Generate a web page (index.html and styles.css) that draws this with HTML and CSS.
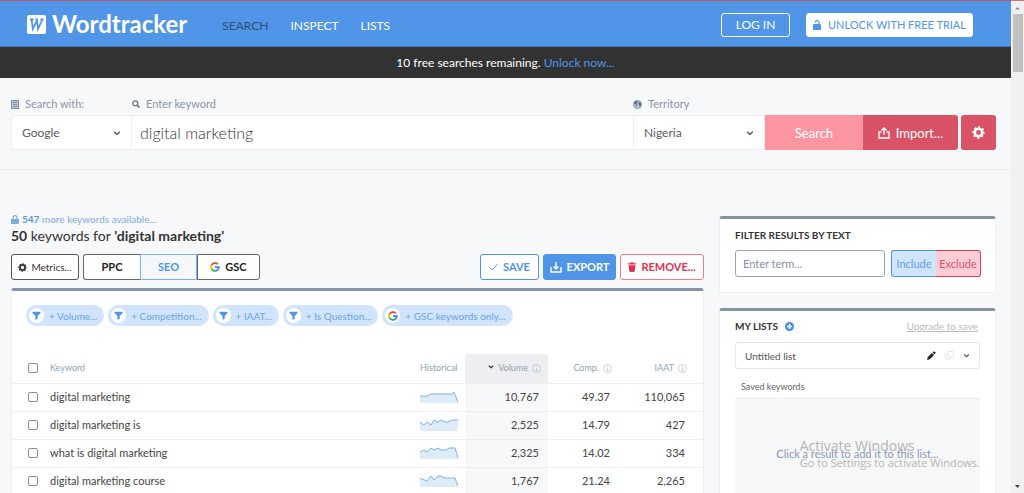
FILE: index.html
```html
<!DOCTYPE html>
<html lang="en">
<head>
<meta charset="utf-8">
<title>Wordtracker</title>
<link rel="stylesheet" href="styles.css">
</head>
<body>
<svg class="sprite" aria-hidden="true">
  <symbol id="chevron" viewBox="0 0 8 8"><path d="M1.300 2.800 4 5.400 6.700 2.800" fill="none" stroke="currentColor" stroke-width="1.200"/></symbol>
  <symbol id="funnel" viewBox="0 0 10 10"><path d="M.5.8h9v1.400L6.300 5.600v3.200L3.800 9.800V5.600L.5 2.200z" fill="currentColor"/></symbol>
  <symbol id="gear" viewBox="0 0 14 14"><g fill="none" stroke="currentColor"><circle cx="7" cy="7" r="4" stroke-width="2.700"/><circle cx="7" cy="7" r="5.700" stroke-width="1.800" stroke-dasharray="2.400 2.077" stroke-dashoffset="1.200"/></g></symbol>
  <symbol id="google" viewBox="0 0 12 12"><g fill="none" stroke-width="2.100"><path d="M9.400 2.700A4.800 4.800 0 0 0 1.800 3.700" stroke="#ea4335"/><path d="M1.800 3.600a4.800 4.800 0 0 0 0 4.800" stroke="#fbbc05"/><path d="M1.800 8.300a4.800 4.800 0 0 0 7.200 1.300" stroke="#34a853"/><path d="M6 6h4.800a4.800 4.800 0 0 1-1.900 3.700" stroke="#4285f4"/></g></symbol>
  <symbol id="info" viewBox="0 0 9 9"><circle cx="4.500" cy="4.500" r="4" fill="none" stroke="currentColor" stroke-width=".8"/><path d="M4.500 2v1M3.600 4h1v2.600M3.400 6.600h2.300" fill="none" stroke="currentColor" stroke-width=".8"/></symbol>
  <symbol id="lock" viewBox="0 0 8 9"><path d="M0 4h8v4.200a.8.8 0 0 1-.8.8H.8A.8.8 0 0 1 0 8.200z" fill="currentColor"/><path d="M2 4.200V2.700a2 2 0 0 1 4 0V4.200" fill="none" stroke="currentColor" stroke-width="1.200"/></symbol>
</svg>

<div class="page">
  <header class="topbar">
    <a class="logo" href="#">
      <svg width="19" height="19" viewBox="0 0 19 19" aria-hidden="true"><rect width="19" height="19" rx="2" fill="#fff"/><path d="M3 4.500H6.500M4.600 4.500 5.800 14 10 5.500 11 14 15.300 4.500M13.500 4.500H16.500M8.500 4.500h2" fill="none" stroke="#5095e8" stroke-width="1.800"/></svg>
      <span>Wordtracker</span>
    </a>
    <nav class="nav">
      <a class="nav-link nav-link-active" href="#">SEARCH</a>
      <a class="nav-link" href="#">INSPECT</a>
      <a class="nav-link" href="#">LISTS</a>
    </nav>
    <div class="account">
      <button class="login">LOG IN</button>
      <button class="trial"><svg width="8" height="10" viewBox="0 0 8 10" aria-hidden="true"><rect y="4" width="8" height="6" rx=".8" fill="currentColor"/><path d="M2.200 2.500a1.900 1.900 0 0 1 3.800.2v2" fill="none" stroke="currentColor" stroke-width="1.200"/></svg>UNLOCK WITH FREE TRIAL</button>
    </div>
  </header>
  <p class="notice">10 free searches remaining. <a href="#">Unlock now...</a></p>

  <form class="search">
    <div class="field field-engine">
      <label for="engine"><svg width="8" height="9" viewBox="0 0 8 9" aria-hidden="true"><rect x=".5" y=".5" width="7" height="8" fill="#b9c5d4" stroke="#8291a7"/><path d="M2 2.500h4M2 4.500h4M2 6.500h4" stroke="#75869d" stroke-width=".8"/></svg>Search with:</label>
      <div class="select-box"><select id="engine"><option>Google</option></select><svg class="chevron"><use href="#chevron"/></svg></div>
    </div>
    <div class="field field-keyword">
      <label for="keyword"><svg width="8" height="8" viewBox="0 0 8 8" aria-hidden="true"><circle cx="3.300" cy="3.300" r="2.500" fill="none" stroke="#67768b" stroke-width="1.300"/><path d="M5 5 7.500 7.500" stroke="#67768b" stroke-width="1.600"/></svg>Enter keyword</label>
      <input id="keyword" class="keyword-input" type="text" value="digital marketing">
    </div>
    <div class="field field-territory">
      <label for="territory"><svg width="9" height="9" viewBox="0 0 9 9" aria-hidden="true"><circle cx="4.500" cy="4.500" r="4" fill="#c9d3df" stroke="#7f8fa5"/><path d="M1 2.500 3 1l2 .5-.5 1.500L3 4l1.500 1L4 7 3 6 2.500 4.500 1 4zM6 2l2 1v2.500L6.500 7 6 5 5 4z" fill="#5f7088"/></svg>Territory</label>
      <div class="select-box"><select id="territory"><option>Nigeria</option></select><svg class="chevron"><use href="#chevron"/></svg></div>
    </div>
    <button class="btn-search" type="button">Search</button>
    <button class="btn-import" type="button"><svg width="12" height="12" viewBox="0 0 12 12" aria-hidden="true"><path d="M3.500 5H1v6h10V5H8.500M6 8V1.500M3.500 3.500 6 1 8.500 3.500" fill="none" stroke="currentColor" stroke-width="1.300"/></svg>Import...</button>
    <button class="btn-gear" type="button" aria-label="Settings"><svg width="13" height="13"><use href="#gear"/></svg></button>
  </form>

  <div class="content">
    <main class="results">
      <a class="more" href="#"><svg width="8" height="9"><use href="#lock"/></svg><span><b>547</b> more keywords available...</span></a>
      <h1 class="title"><b>50</b> keywords for <b>'digital marketing'</b></h1>
      <div class="toolbar">
        <button class="tool tool-metrics"><svg width="9" height="9"><use href="#gear"/></svg>Metrics...</button>
        <div class="tabs">
          <button class="tab">PPC</button>
          <button class="tab tab-active">SEO</button>
          <button class="tab tab-gsc"><svg width="10" height="10"><use href="#google"/></svg>GSC</button>
        </div>
        <div class="actions">
          <button class="tool tool-save"><svg width="9" height="8" viewBox="0 0 9 8" aria-hidden="true"><path d="M.8 4.500 3.300 7 8.300 1.200" fill="none" stroke="currentColor"/></svg>SAVE</button>
          <button class="tool tool-export"><svg width="12" height="12" viewBox="0 0 12 12" aria-hidden="true"><path d="M1 6v5h10V6M6 1v7M3.600 5.500 6 8l2.400-2.500" fill="none" stroke="currentColor" stroke-width="1.400"/></svg>EXPORT</button>
          <button class="tool tool-remove"><svg width="8" height="10" viewBox="0 0 8 10" aria-hidden="true"><path d="M0 1.200h2.500L3 .2h2l.5 1H8v1.300H0zM.6 3.300h6.800L6.700 9.300l-.8.7H2.100l-.8-.7z" fill="currentColor"/></svg>REMOVE...</button>
        </div>
      </div>

      <section class="card results-card">
        <div class="filters">
          <button class="pill"><span class="pill-icon"><svg width="9" height="9"><use href="#funnel"/></svg></span>+ Volume...</button>
          <button class="pill"><span class="pill-icon"><svg width="9" height="9"><use href="#funnel"/></svg></span>+ Competition...</button>
          <button class="pill"><span class="pill-icon"><svg width="9" height="9"><use href="#funnel"/></svg></span>+ IAAT...</button>
          <button class="pill"><span class="pill-icon"><svg width="9" height="9"><use href="#funnel"/></svg></span>+ Is Question...</button>
          <button class="pill"><span class="pill-icon"><svg width="10" height="10"><use href="#google"/></svg></span>+ GSC keywords only...</button>
        </div>
        <table class="table">
          <thead>
            <tr>
              <th class="col-check"><input type="checkbox" aria-label="Select all"></th>
              <th class="col-keyword">Keyword</th>
              <th class="col-history">Historical</th>
              <th class="col-volume"><svg class="sort" width="6" height="4" viewBox="0 0 6 4" aria-hidden="true"><path d="M.8.800 3 2.800 5.200.8" fill="none" stroke="#333" stroke-width="1.200"/></svg>Volume<svg class="info"><use href="#info"/></svg></th>
              <th class="col-comp">Comp.<svg class="info"><use href="#info"/></svg></th>
              <th class="col-iaat">IAAT<svg class="info"><use href="#info"/></svg></th>
            </tr>
          </thead>
          <tbody>
            <tr>
              <td class="col-check"><input type="checkbox" aria-label="digital marketing"></td><td>digital marketing</td>
              <td class="col-history"><svg class="spark" viewBox="0 0 38 12"><path class="spark-fill" d="M0 5h7l4-2h21l2-2 4 11H0z"/><path class="spark-line" d="M0 5h7l4-2h21l2-2 4 10"/></svg></td>
              <td class="col-volume">10,767</td><td class="col-comp">49.37</td><td class="col-iaat">110,065</td>
            </tr>
            <tr>
              <td class="col-check"><input type="checkbox" aria-label="digital marketing is"></td><td>digital marketing is</td>
              <td class="col-history"><svg class="spark" viewBox="0 0 38 12"><path class="spark-fill" d="M0 3l4 3 3-3 4 3 3-5 4 2 3-2 4 2h3l4-2h6v11H0z"/><path class="spark-line" d="M0 3l4 3 3-3 4 3 3-5 4 2 3-2 4 2h3l4-2h6"/></svg></td>
              <td class="col-volume">2,525</td><td class="col-comp">14.79</td><td class="col-iaat">427</td>
            </tr>
            <tr>
              <td class="col-check"><input type="checkbox" aria-label="what is digital marketing"></td><td>what is digital marketing</td>
              <td class="col-history"><svg class="spark" viewBox="0 0 38 12"><path class="spark-fill" d="M0 5l4-2 3 2 4-4 3 2 4-2 3 2h5l3-2h6l3 11H0z"/><path class="spark-line" d="M0 5l4-2 3 2 4-4 3 2 4-2 3 2h5l3-2h6l3 10"/></svg></td>
              <td class="col-volume">2,325</td><td class="col-comp">14.02</td><td class="col-iaat">334</td>
            </tr>
            <tr>
              <td class="col-check"><input type="checkbox" aria-label="digital marketing course"></td><td>digital marketing course</td>
              <td class="col-history"><svg class="spark" viewBox="0 0 38 12"><path class="spark-fill" d="M0 3l7 3 4-5 3 4 4-4h3l4 2h10l3 9H0z"/><path class="spark-line" d="M0 3l7 3 4-5 3 4 4-4h3l4 2h10l3 8"/></svg></td>
              <td class="col-volume">1,767</td><td class="col-comp">21.24</td><td class="col-iaat">2,265</td>
            </tr>
          </tbody>
        </table>
      </section>
    </main>

    <aside class="sidebar">
      <section class="card filter-card">
        <h2><label for="term">FILTER RESULTS BY TEXT</label></h2>
        <div class="term-row">
          <input id="term" class="term" type="text" placeholder="Enter term...">
          <div class="mode"><button class="include">Include</button><button class="exclude">Exclude</button></div>
        </div>
      </section>
      <section class="card lists-card">
        <div class="lists-head">
          <h2>MY LISTS</h2>
          <button class="icon-btn" aria-label="Add list"><svg width="9" height="9" viewBox="0 0 9 9"><circle cx="4.500" cy="4.500" r="4.500" fill="#4a90e8"/><path d="M4.500 2v5M2 4.500h5" stroke="#fff" stroke-width="1.500"/></svg></button>
          <a class="upgrade" href="#">Upgrade to save</a>
        </div>
        <div class="list-box">
          <select aria-label="List"><option>Untitled list</option></select>
          <button class="icon-btn" aria-label="Rename list"><svg width="9" height="9" viewBox="0 0 9 9"><path d="M0 9l.8-3L5 2l2 2-4.200 4.200zM5.600 1.400 7 .2l1.800 1.600L7.600 3.400z" fill="#222"/></svg></button>
          <button class="icon-btn" aria-label="Copy list"><svg width="9" height="9" viewBox="0 0 9 9"><path d="M3 .5h5.500V6H3zM3 3H.5v5H5V6" fill="none" stroke="#e6e6e6"/></svg></button>
          <svg class="chevron chevron-small"><use href="#chevron"/></svg>
        </div>
        <h3>Saved keywords</h3>
        <div class="drop">
          <p>Click a result to add it to this list...</p>
          <div class="watermark"><span class="watermark-title">Activate Windows</span><span>Go to Settings to activate Windows.</span></div>
        </div>
      </section>
    </aside>
  </div>
</div>
<div class="scrollbar" aria-hidden="true">
  <svg width="13" height="13" viewBox="0 0 13 13"><path d="M4 8.500 6.500 6 9 8.500z" fill="#909090"/></svg>
  <div class="thumb"></div>
  <svg class="scroll-down" width="13" height="13" viewBox="0 0 13 13"><path d="M4 5 6.500 8 9 5z" fill="#444"/></svg>
</div>
</body>
</html>
```

FILE: styles.css
```css
* { box-sizing: border-box; }
body {
  margin: 0;
  display: flex;
  height: 100vh;
  overflow: hidden;
  background: #f6f8fa;
  color: #3c3c3c;
  font: 12px/16px Lato, "Liberation Sans", sans-serif;
}
button, input, select { font: inherit; color: inherit; }
button { padding: 0; border: 0; background: none; white-space: nowrap; }
select { appearance: none; border: 0; background: none; outline: 0; }
a { text-decoration: none; }
h1, h2, h3, p { margin: 0; }
svg { flex: none; }
.sprite { position: absolute; width: 0; height: 0; }
.page { flex: 1; min-width: 0; display: flex; flex-direction: column; }

.topbar {
  flex: none;
  display: flex;
  align-items: center;
  padding: 11px 38px 8px 27px;
  border-top: 1px solid #b55b6c;
  border-bottom: 1px solid #4176b8;
  background: #5095e8;
  color: #fff;
}
.logo { display: flex; align-items: center; gap: 6px; padding-bottom: 2px; color: #fff; font: bold 24px/24px Lato, sans-serif; }
.nav { display: flex; gap: 22px; margin-left: 35px; padding-top: 1px; }
.nav-link { color: #fff; }
.nav-link-active { color: #2f4f78; }
.account { display: flex; gap: 16px; margin-left: auto; }
.login, .trial { height: 24px; border: 1px solid #fff; border-radius: 3px; font-size: 11px; }
.login { width: 69px; font-size: 12px; }
.trial { display: flex; align-items: center; justify-content: center; gap: 7px; width: 167px; background: #fff; color: #5095e8; }

.notice { flex: none; padding: 8px 15px 7px; background: #323232; color: #fff; text-align: center; }
.notice a { color: #5095e8; }

.search {
  flex: none;
  display: flex;
  align-items: flex-end;
  padding: 18px 15px 19px 11px;
  border-bottom: 1px solid #eaecef;
}
.field { display: flex; flex-direction: column; gap: 3px; }
.field label { display: flex; align-items: center; gap: 6px; color: #8796aa; font-size: 11px; }
.field-engine { width: 121px; }
.field-keyword { flex: 1; min-width: 0; }
.field-territory { width: 132px; }
.select-box { display: flex; align-items: center; height: 35px; padding: 0 10px; border: 1px solid #eceef1; background: #fff; color: #5c5c5c; }
.field-engine .select-box { border-radius: 3px 0 0 3px; }
.select-box select { flex: 1; min-width: 0; padding: 0; }
.chevron { width: 8px; height: 8px; color: #444; }
.keyword-input { width: 100%; height: 35px; padding: 0 8px; border: solid #eceef1; border-width: 1px 0; outline: 0; color: #333; font-size: 16px; font-weight: 300; }
.btn-search, .btn-import, .btn-gear { height: 35px; color: #fff; font-size: 13px; }
.btn-search { width: 98px; background: #fb95a2; }
.btn-import { display: flex; align-items: center; justify-content: center; gap: 6px; width: 95px; border-radius: 0 3px 3px 0; background: #d95266; }
.btn-gear { display: flex; align-items: center; justify-content: center; width: 35px; margin-left: 3px; border-radius: 3px; background: #d95266; }

.content { flex: 1; min-height: 0; display: grid; grid-template-columns: minmax(0, 1fr) 277px; gap: 15px; padding: 0 15px 0 11px; }
.results { display: flex; flex-direction: column; padding-top: 41px; }
.more { display: flex; align-items: center; gap: 3px; color: #7fabde; font-size: 10px; }
.more b { color: #5c97db; }
.title { font-size: 14px; line-height: 18px; font-weight: normal; color: #333; }
.toolbar { display: flex; gap: 4px; margin-top: 9px; font-size: 11px; }
.tool { display: flex; align-items: center; justify-content: center; gap: 5px; height: 26px; border: 1px solid; border-radius: 3px; background: #fff; }
.tool-metrics { width: 68px; gap: 4px; color: #333; border-color: #555; font-size: 10px; }
.tabs { display: flex; }
.tab { width: 57px; height: 26px; border: 1px solid #666; background: #fff; color: #222; font-weight: bold; }
.tab:first-child { border-right: 0; border-radius: 3px 0 0 3px; }
.tab-active { border-color: #7db0ee; background: #f5f7fa; color: #5095e8; }
.tab-gsc { display: flex; align-items: center; justify-content: center; gap: 5px; width: 63px; border-radius: 0 3px 3px 0; }
.actions { display: flex; gap: 4px; margin-left: auto; font-weight: bold; }
.tool-save { width: 59px; color: #5095e8; }
.tool-export { width: 73px; border-color: #5095e8; background: #5095e8; color: #fff; }
.tool-remove { width: 84px; border-color: #ee7c90; color: #e2304f; }

.card { border: 1px solid #edeff2; border-top: 3px solid #8693a5; border-radius: 3px 3px 2px 2px; background: #fff; }
.results-card { margin-top: 8px; }
.filters { display: flex; gap: 4px; padding: 14px 14px 28px; }
.pill { display: flex; align-items: center; gap: 5px; height: 21px; padding: 0 7px 0 3px; border-radius: 11px; background: #d0e4fd; color: #6ca2e8; font-size: 10px; }
.pill-icon { display: flex; align-items: center; justify-content: center; width: 15px; height: 15px; border-radius: 50%; background: #fff; color: #5095e8; }

.table { width: 100%; table-layout: fixed; border-collapse: collapse; }
.table th, .table td { height: 29px; padding: 0; border-bottom: 1px solid #eeeff1; text-align: left; color: #444; font-size: 11px; }
.table td { height: 28px; }
.table th { color: #92a0b1; font-size: 9px; font-weight: normal; }
.table .col-check { width: 38px; padding-left: 16px; }
.table .col-history { width: 53px; padding-left: 8px; }
.table .col-volume { width: 83px; padding-right: 9px; background: #f7f8fa; text-align: right; }
.table .col-comp { width: 71px; padding-right: 9px; text-align: right; }
.table .col-iaat { width: 84px; padding-right: 18px; text-align: right; }
.table th.col-volume { padding-right: 7px; border-radius: 3px 3px 0 0; background: #edeef2; }
.table th.col-comp { padding-right: 7px; }
.table th.col-iaat { padding-right: 16px; }
.table input { display: block; appearance: none; width: 10px; height: 10px; margin: 0; border: 1px solid #8d8d8d; border-radius: 2px; background: #fff; }
.info { width: 9px; height: 9px; margin-left: 4px; vertical-align: -2px; color: #c3c5c9; }
.sort { margin-right: 4px; vertical-align: 2px; }
.spark { display: block; width: 38px; height: 12px; }
.spark-fill { fill: #deebf8; }
.spark-line { fill: none; stroke: #7db0ee; stroke-width: 1; }

.sidebar { display: flex; flex-direction: column; gap: 15px; padding-top: 46px; }
.sidebar h2 { font-size: 10px; line-height: 16px; color: #333; }
.filter-card { padding: 8px 14px 15px 15px; }
.term-row { display: flex; gap: 6px; margin-top: 7px; }
.term { flex: 1; min-width: 0; height: 27px; padding: 0 7px; border: 1px solid #98a4b3; border-radius: 3px; outline: 0; font-size: 11px; }
.term::placeholder { color: #8492a5; opacity: 1; }
.mode { display: flex; font-size: 11px; }
.include, .exclude { width: 45px; height: 27px; border: 1px solid; }
.include { border-color: #5095e8; border-right: 0; border-radius: 3px 0 0 3px; background: #d0e4fd; color: #5f9eeb; }
.exclude { border-color: #df3e5b; border-left: 0; border-radius: 0 3px 3px 0; background: #fdcdd6; color: #e2526d; }
.lists-card { flex: 1; display: flex; flex-direction: column; padding: 7px 15px 0; border-bottom: 0; }
.lists-head { display: flex; align-items: center; gap: 7px; }
.icon-btn { display: flex; }
.upgrade { margin-left: auto; padding-right: 2px; color: #bbb; font-size: 10px; text-decoration: underline; }
.list-box { display: flex; align-items: center; gap: 9px; height: 27px; margin-top: 8px; padding: 0 9px; border: 1px solid #e3e5e8; border-radius: 3px; }
.list-box select { flex: 1; min-width: 0; padding: 0; color: #555; font-size: 10px; }
.chevron-small { width: 7px; height: 7px; }
.sidebar h3 { margin: 10px 6px 3px; color: #666; font-size: 9px; line-height: 16px; font-weight: normal; }
.drop { position: relative; flex: 1; border-top: 1px solid #eceef1; background: #f6f7f9; }
.drop p { padding-top: 47px; color: #8998b2; font-size: 11px; text-align: center; }
.watermark { position: absolute; top: 38px; right: 0; display: flex; flex-direction: column; color: #b5b5b5; font: 11px/16px "Open Sans", "Noto Sans", sans-serif; white-space: nowrap; }
.watermark-title { font-size: 14px; line-height: 18px; }

.scrollbar { flex: none; display: flex; flex-direction: column; width: 13px; border-top: 1px solid #c9797c; background: #f0f0f0; }
.thumb { width: 10px; height: 58px; margin: 0 auto; background: #c1c1c1; }
.scroll-down { margin-top: auto; }
```
